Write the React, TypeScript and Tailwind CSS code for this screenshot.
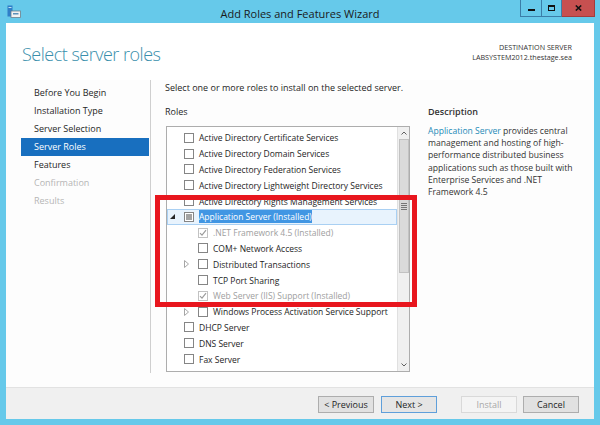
import React from "react";

type Row = {
    text: string;
    level: 0 | 1;
    expander?: "open" | "closed";
    state?: "none" | "partial" | "checked";
    disabled?: boolean;
    selected?: boolean;
};

const rows: Row[] = [
    { text: "Active Directory Certificate Services", level: 0 },
    { text: "Active Directory Domain Services", level: 0 },
    { text: "Active Directory Federation Services", level: 0 },
    { text: "Active Directory Lightweight Directory Services", level: 0 },
    { text: "Active Directory Rights Management Services", level: 0 },
    { text: "Application Server (Installed)", level: 0, expander: "open", state: "partial", selected: true },
    { text: ".NET Framework 4.5 (Installed)", level: 1, state: "checked", disabled: true },
    { text: "COM+ Network Access", level: 1 },
    { text: "Distributed Transactions", level: 1, expander: "closed" },
    { text: "TCP Port Sharing", level: 1 },
    { text: "Web Server (IIS) Support (Installed)", level: 1, state: "checked", disabled: true },
    { text: "Windows Process Activation Service Support", level: 1, expander: "closed" },
    { text: "DHCP Server", level: 0 },
    { text: "DNS Server", level: 0 },
    { text: "Fax Server", level: 0 },
];

const steps = [
    { label: "Before You Begin" },
    { label: "Installation Type" },
    { label: "Server Selection" },
    { label: "Server Roles", active: true },
    { label: "Features" },
    { label: "Confirmation", muted: true },
    { label: "Results", muted: true },
];

function Checkbox({ state, disabled }: { state?: Row["state"]; disabled?: boolean }) {
    return (
        <span
            className={
                "w-[10px] h-[10px] shrink-0 border bg-white flex items-center justify-center " +
                (disabled ? "border-[#c2c2c2]" : "border-[#858585]")
            }
        >
            {state === "partial" && <span className="w-[6px] h-[6px] bg-[#a3a3a3]" />}
            {state === "checked" && (
                <svg width="8" height="8" viewBox="0 0 8 8">
                    <polyline points="1,4.2 3,6.2 7,1.2" fill="none" stroke="#9c9c9c" strokeWidth="1.2" />
                </svg>
            )}
        </span>
    );
}

function Expander({ kind }: { kind?: Row["expander"] }) {
    return (
        <span className="w-[17px] h-full shrink-0 flex items-center pl-[3px]">
            {kind === "open" && (
                <svg width="5" height="5" viewBox="0 0 5 5">
                    <polygon points="0,5 5,5 5,0" fill="#262626" />
                </svg>
            )}
            {kind === "closed" && (
                <svg width="5" height="8" viewBox="0 0 5 8">
                    <polygon points="0.5,0.5 4.5,4 0.5,7.5" fill="none" stroke="#a6a6a6" strokeWidth="1" />
                </svg>
            )}
        </span>
    );
}

function Btn({ label, primary, disabled }: { label: string; primary?: boolean; disabled?: boolean }) {
    return (
        <div
            className={
                "w-[56px] h-[17px] flex items-center justify-center text-[9px] border " +
                (disabled
                    ? "bg-[#f4f4f4] border-[#d9d9d9] text-[#a8a8a8]"
                    : primary
                    ? "bg-[#e5e5e5] border-[#5f9fda] text-[#1e1e1e]"
                    : "bg-[#e1e1e1] border-[#adadad] text-[#1e1e1e]")
            }
        >
            {label}
        </div>
    );
}

export default function App() {
    return (
        <div
            className="relative w-[600px] h-[425px] bg-[#66c9ea] flex flex-col overflow-hidden text-[#1e1e1e]"
            style={{ fontFamily: '"Open Sans", "Noto Sans", sans-serif' }}
        >
            {/* Title bar */}
            <div className="relative h-[23px] flex items-start">
                <svg className="absolute left-[7px] top-[5px]" width="14" height="13" viewBox="0 0 14 13">
                    <rect x="0.5" y="0.5" width="5" height="11" fill="#2f7fc8" />
                    <rect x="1.5" y="2" width="3" height="1" fill="#bfe2f5" />
                    <rect x="4" y="6" width="9.5" height="6.5" fill="#f2f2f2" stroke="#6b7f8c" strokeWidth="0.8" />
                    <rect x="6" y="8" width="5.5" height="1.5" fill="#5b8fb8" />
                </svg>
                <div className="flex-1 text-center text-[11px] leading-[23px] pt-[2px] text-[#1a1a1a]">
                    Add Roles and Features Wizard
                </div>
                <div className="absolute right-[5px] top-0 flex h-[17px]">
                    <div className="w-[22px] h-full border border-[#3b7ea8] border-t-0 flex items-center justify-center">
                        <span className="w-[7px] h-[2px] bg-[#111] mt-[3px]" />
                    </div>
                    <div className="w-[20px] h-full border border-l-0 border-[#3b7ea8] border-t-0 flex items-center justify-center">
                        <span className="w-[7px] h-[6px] border-[1.5px] border-t-[2px] border-[#111]" />
                    </div>
                    <div className="w-[33px] h-full bg-[#c75050] border border-l-0 border-t-0 border-[#a33c3c] flex items-center justify-center">
                        <svg width="7" height="6" viewBox="0 0 7 6">
                            <path d="M0.8 0.5 L6.2 5.5 M6.2 0.5 L0.8 5.5" stroke="#111" strokeWidth="1.6" />
                        </svg>
                    </div>
                </div>
            </div>

            {/* Window body */}
            <div className="mx-[6px] mb-[6px] flex-1 bg-[#fdfdfd] flex flex-col">
                {/* Header */}
                <div className="h-[57px] bg-white flex items-start justify-between pl-[16px] pr-[22px]">
                    <div className="mt-[19px] text-[18px] leading-[24px] font-light text-[#3a8fac] tracking-[-0.5px]">
                        Select server roles
                    </div>
                    <div className="mt-[19px] text-right text-[7.2px] leading-[10px] text-[#333]">
                        <div>DESTINATION SERVER</div>
                        <div>LABSYSTEM2012.thestage.sea</div>
                    </div>
                </div>

                {/* Content */}
                <div className="h-[307px] flex">
                    {/* Steps */}
                    <div className="w-[145px] h-[293px] border-r border-[#cfcfcf] pt-[4px] pl-[15px]">
                        {steps.map((s) => (
                            <div
                                key={s.label}
                                className={
                                    "h-[18px] w-[128px] flex items-center pl-[13px] text-[9px] " +
                                    (s.active ? "bg-[#186fbf] text-white" : s.muted ? "text-[#b5b5b5]" : "text-[#262626]")
                                }
                            >
                                {s.label}
                            </div>
                        ))}
                    </div>

                    {/* Main */}
                    <div className="flex-1 pl-[14px] text-[9px]">
                        <div className="h-[16px] leading-[16px]">
                            Select one or more roles to install on the selected server.
                        </div>
                        <div className="flex mt-[8px]">
                            <div className="w-[245px]">
                                <div className="h-[16px] leading-[16px]">Roles</div>
                                <div className="mt-[6px] ml-[1px] w-[244px] h-[246px] border border-[#adadad] bg-white flex text-[8.5px]">
                                    <div className="flex-1 pt-[3px]">
                                        {rows.map((r) => (
                                            <div
                                                key={r.text}
                                                className={
                                                    "h-[15.8px] flex items-center " +
                                                    (r.level === 1 ? "pl-[14px] " : "") +
                                                    (r.selected ? "bg-[#e8f3fd] outline outline-1 outline-[#a9d0f3] -outline-offset-1" : "")
                                                }
                                            >
                                                <Expander kind={r.expander} />
                                                <Checkbox state={r.state} disabled={r.disabled} />
                                                <span
                                                    className={
                                                        "ml-[5px] whitespace-nowrap leading-[13px] " +
                                                        (r.selected
                                                            ? "bg-[#4196e3] text-white"
                                                            : r.disabled
                                                            ? "text-[#9e9e9e]"
                                                            : "")
                                                    }
                                                >
                                                    {r.text}
                                                </span>
                                            </div>
                                        ))}
                                    </div>
                                    {/* Scrollbar */}
                                    <div className="w-[12px] border-l border-[#e0e0e0] bg-[#f0f0f0] flex flex-col items-center">
                                        <div className="h-[12px] w-full flex items-center justify-center">
                                            <svg width="6" height="4" viewBox="0 0 6 4">
                                                <polyline points="0.5,3.5 3,1 5.5,3.5" fill="none" stroke="#606060" strokeWidth="1" />
                                            </svg>
                                        </div>
                                        <div className="w-[10px] h-[134px] bg-[#dadada] border border-[#c2c2c2] flex items-center justify-center">
                                            <div className="flex flex-col gap-[1px]">
                                                <span className="w-[6px] h-[1px] bg-[#777]" />
                                                <span className="w-[6px] h-[1px] bg-[#777]" />
                                                <span className="w-[6px] h-[1px] bg-[#777]" />
                                                <span className="w-[6px] h-[1px] bg-[#777]" />
                                            </div>
                                        </div>
                                        <div className="flex-1" />
                                        <div className="h-[12px] w-full flex items-center justify-center">
                                            <svg width="6" height="4" viewBox="0 0 6 4">
                                                <polyline points="0.5,0.5 3,3 5.5,0.5" fill="none" stroke="#606060" strokeWidth="1" />
                                            </svg>
                                        </div>
                                    </div>
                                </div>
                            </div>
                            <div className="ml-[18px] w-[165px]">
                                <div className="h-[16px] leading-[16px] font-semibold text-[#333]">Description</div>
                                <div className="mt-[5px] leading-[12.2px] text-[8.6px] text-[#333] whitespace-nowrap">
                                    <span className="text-[#1d8bb8]">Application Server</span> provides central
                                    <br />
                                    management and hosting of high-
                                    <br />
                                    performance distributed business
                                    <br />
                                    applications such as those built with
                                    <br />
                                    Enterprise Services and .NET
                                    <br />
                                    Framework 4.5
                                </div>
                            </div>
                        </div>
                    </div>
                </div>

                {/* Footer */}
                <div className="flex-1 bg-[#f0f0f0] border-t border-[#e2e2e2] flex items-start justify-end pr-[15px] pt-[8px]">
                    <Btn label="< Previous" />
                    <div className="ml-[7px]">
                        <Btn label="Next >" primary />
                    </div>
                    <div className="ml-[24px]">
                        <Btn label="Install" disabled />
                    </div>
                    <div className="ml-[6px]">
                        <Btn label="Cancel" />
                    </div>
                </div>
            </div>

            {/* Red highlight annotation */}
            <div className="absolute left-[155px] top-[195px] w-[262px] h-[112px] border-[5px] border-[#e8161e] pointer-events-none" />
        </div>
    );
}
